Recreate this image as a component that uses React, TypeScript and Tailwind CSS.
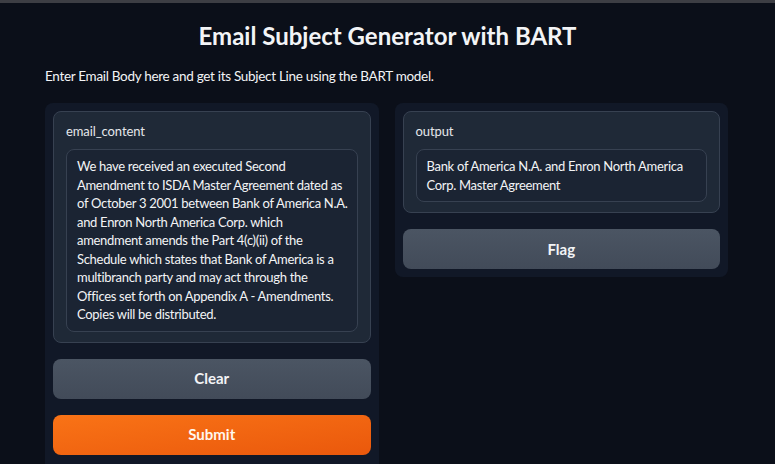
import React from 'react';

const BODY = `We have received an executed Second
Amendment to ISDA Master Agreement dated as
of October 3 2001 between Bank of America N.A.
and Enron North America Corp. which
amendment amends the Part 4(c)(ii) of the
Schedule which states that Bank of America is a
multibranch party and may act through the
Offices set forth on Appendix A - Amendments.
Copies will be distributed.`;

const OUTPUT = `Bank of America N.A. and Enron North America
Corp. Master Agreement`;

export default function App() {
  return (
    <div
      className="w-[775px] h-[464px] overflow-hidden bg-[#0b0f19] text-[#f3f4f6]"
      style={{ fontFamily: 'Lato, "Noto Sans", sans-serif' }}
    >
      <div className="h-[3px] bg-[#3d3e44]" />

      <h1 className="mt-[18px] text-center text-[24px] font-bold leading-[30px] tracking-[0px]">
        Email Subject Generator with BART
      </h1>
      <p className="mt-[15px] pl-[45px] text-[13.5px] leading-[20px] tracking-[-0.3px]">
        Enter Email Body here and get its Subject Line using the BART model.
      </p>

      <div className="mt-[17px] flex gap-4 pl-[45px] pr-[47px] items-start">
        {/* left column */}
        <div className="flex-1 min-w-0 rounded-lg bg-[#111827] p-2 pb-4 flex flex-col gap-4">
          <div className="rounded-lg border border-[#374151] bg-[#1f2937] px-3 pt-[10px] pb-[10px]">
            <div className="text-[13px] leading-[18px] text-[#e5e7eb] tracking-[-0.1px]">email_content</div>
            <div className="mt-[9px] overflow-hidden rounded-lg border border-[#374151] bg-[#1b2433] px-[10px] py-[7px] text-[13px] leading-[18.5px] tracking-[-0.3px] whitespace-pre text-[#f3f4f6]">
              {BODY}
            </div>
          </div>
          <button className="h-[40px] rounded-lg bg-gradient-to-b from-[#4b5563] to-[#424b59] text-[15px] font-bold text-[#f3f4f6]">
            Clear
          </button>
          <button className="h-[40px] rounded-lg bg-gradient-to-br from-[#f97316] to-[#ea580c] text-[15px] font-bold text-[#fff7ed]">
            Submit
          </button>
        </div>

        {/* right column */}
        <div className="flex-1 min-w-0 rounded-lg bg-[#111827] p-2 flex flex-col gap-4">
          <div className="rounded-lg border border-[#374151] bg-[#1f2937] px-3 pt-[10px] pb-[10px]">
            <div className="text-[13px] leading-[18px] text-[#e5e7eb] tracking-[-0.1px]">output</div>
            <div className="mt-[9px] overflow-hidden rounded-lg border border-[#374151] bg-[#1b2433] px-[10px] py-[7px] text-[13px] leading-[18.5px] tracking-[-0.3px] whitespace-pre text-[#f3f4f6]">
              {OUTPUT}
            </div>
          </div>
          <button className="h-[40px] rounded-lg bg-gradient-to-b from-[#4b5563] to-[#424b59] text-[15px] font-bold text-[#f3f4f6]">
            Flag
          </button>
        </div>
      </div>
    </div>
  );
}
